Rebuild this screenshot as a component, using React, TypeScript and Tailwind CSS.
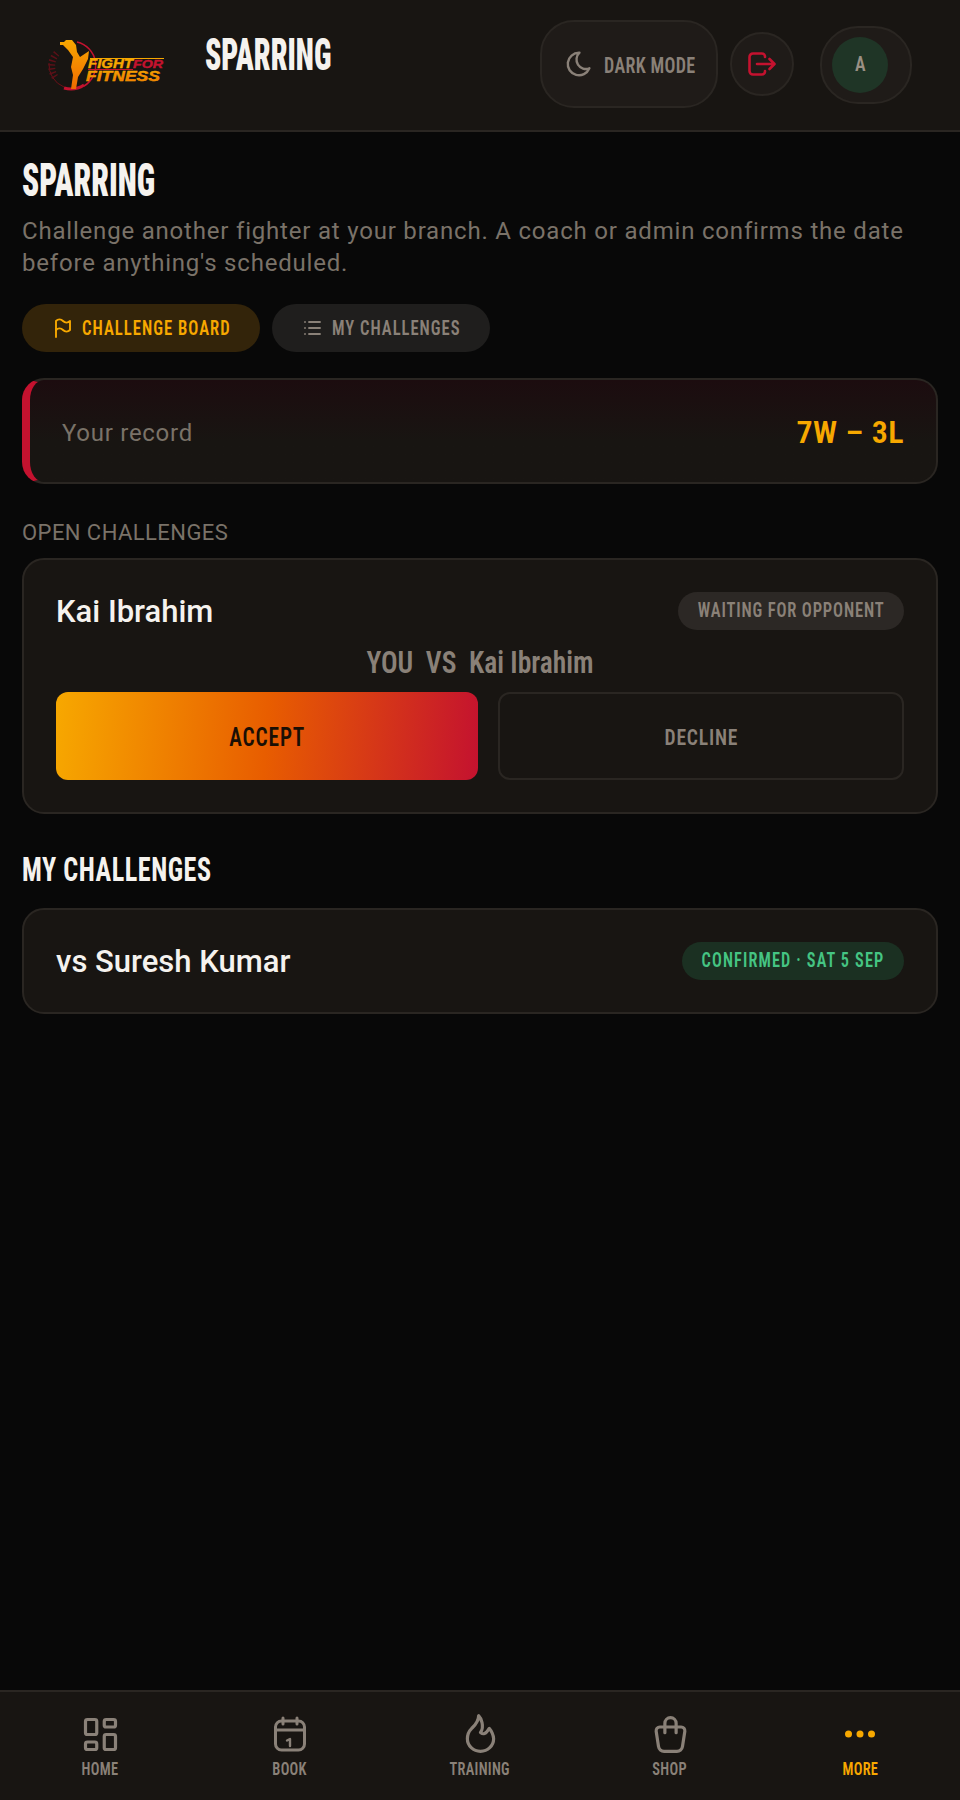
import type { ReactNode } from "react";
import { TbFlag, TbFlame, TbLayoutDashboard, TbList, TbMoon, TbShoppingBag } from "react-icons/tb";

const Cond = ({ className, children }: { className: string; children: ReactNode }) => (
  <span className={`inline-block whitespace-nowrap font-['Roboto',sans-serif] [font-stretch:75%] ${className}`}>{children}</span>
);

const Logo = () => (
  <svg viewBox="0 0 120 52" className="w-[120px] h-[52px] shrink-0">
    <defs>
      <linearGradient id="gold" x1="0" y1="0" x2="0" y2="1">
        <stop offset="0" stopColor="#f7a800" />
        <stop offset="1" stopColor="#f06a00" />
      </linearGradient>
    </defs>
    <path d="M31 3 A24 24 0 0 1 38 47" fill="none" stroke="#c4122f" strokeWidth="1.500" />
    <path d="M38 46 A24 24 0 0 1 18 49" fill="none" stroke="#c4122f" strokeWidth="3" />
    <path d="M18 48 A24 24 0 0 1 3 24" fill="none" stroke="#6b1018" strokeWidth="1" />
    <path d="M9 38 A19 19 0 0 1 11 14" fill="none" stroke="#5c1018" strokeWidth="7" strokeDasharray="1.500 2.500" />
    <path d="M14 3 L18 3 L20 1 L26 1 L30 6 L31 13 L34 18 L43 12 L42 20 L37 30 L32 38 L30 50 L25 50 L27 36 L25 28 L27 18 L22 11 L17 6 L14 6 Z" fill="url(#gold)" />
    <text x="42" y="29" fontFamily="'Liberation Sans',sans-serif" fontWeight="700" fontStyle="italic" fontSize="13.500" fill="#f7a800" stroke="#f7a800" strokeWidth="0.400" textLength="45" lengthAdjust="spacingAndGlyphs">FIGHT</text>
    <text x="87" y="29" fontFamily="'Liberation Sans',sans-serif" fontWeight="700" fontStyle="italic" fontSize="11" fill="#c4122f" stroke="#c4122f" strokeWidth="0.400" textLength="30" lengthAdjust="spacingAndGlyphs">FOR</text>
    <rect x="44" y="19" width="74" height="1" fill="#f7a800" />
    <rect x="42" y="30" width="45" height="1" fill="#c4122f" />
    <text x="40" y="42" fontFamily="'Liberation Sans',sans-serif" fontWeight="700" fontStyle="italic" fontSize="14" fill="url(#gold)" stroke="#f7a800" strokeWidth="0.400" textLength="74" lengthAdjust="spacingAndGlyphs">FITNESS</text>
  </svg>
);

const LogoutIcon = () => (
  <svg viewBox="0 0 28 24" className="w-[28px] h-[24px]" fill="none" stroke="currentColor" strokeWidth="2.600" strokeLinecap="round" strokeLinejoin="round">
    <path d="M17 5V4.500a3 3 0 0 0-3-3H5a3.500 3.500 0 0 0-3.500 3.500v14a3.500 3.500 0 0 0 3.500 3.500h9a3 3 0 0 0 3-3V19" />
    <path d="M9 12h17M21.500 7l5 5-5 5" />
  </svg>
);

const CalendarOne = () => (
  <svg viewBox="0 0 36 36" className="w-[36px] h-[36px]" fill="none" stroke="currentColor" strokeWidth="3" strokeLinecap="round" strokeLinejoin="round">
    <rect x="3.500" y="5" width="29" height="29" rx="6" />
    <path d="M3.500 14h29M11 2v6M25 2v6" />
    <path d="M15 24.500l3-1.500v7" strokeWidth="2.400" />
  </svg>
);

const DotsIcon = () => (
  <svg viewBox="0 0 32 32" className="w-8 h-8" fill="currentColor">
    <circle cx="4.500" cy="16" r="3.500" />
    <circle cx="16" cy="16" r="3.500" />
    <circle cx="27.500" cy="16" r="3.500" />
  </svg>
);

const NavItem = ({ icon, label, active }: { icon: ReactNode; label: string; active?: boolean }) => (
  <div className={`flex flex-col items-center gap-[8px] w-[120px] ${active ? "text-[#f7a800]" : "text-[#8a8178]"}`}>
    <div className="h-[36px] flex items-center justify-center">{icon}</div>
    <Cond className="origin-center scale-x-[0.8] text-[18px] leading-[18px] font-semibold tracking-[0.02em]">{label}</Cond>
  </div>
);

export default function App() {
  return (
    <div className="w-[960px] h-[1800px] bg-[#080808] flex flex-col font-['Roboto',sans-serif]">
      <header className="h-[132px] shrink-0 bg-[#181512] border-b-2 border-[#2a2622] flex items-start pl-[46px] pr-[48px]">
        <div className="mt-[39px]"><Logo /></div>
        <h1 className="ml-[39px] mt-[31px] flex h-[48px]">
          <Cond className="origin-left scale-x-[0.66] text-[45px] leading-[48px] font-black text-[#f5f2ee]">SPARRING</Cond>
        </h1>
        <div className="ml-auto flex items-start">
          <div className="mt-[20px] w-[178px] h-[88px] rounded-[34px] bg-[#1f1b18] border-2 border-[#2a2622] flex items-center justify-center gap-[10px] text-[#8a8178]">
            <TbMoon size={30} strokeWidth={1.9} />
            <Cond className="w-[91px] pt-[2px] origin-left scale-x-[0.82] text-[22px] font-semibold tracking-[0.02em]">DARK MODE</Cond>
          </div>
          <div className="mt-[32px] ml-[12px] w-[64px] h-[64px] rounded-full bg-[#1f1b18] border-2 border-[#2a2622] flex items-center justify-center text-[#c4122f]">
            <LogoutIcon />
          </div>
          <div className="mt-[26px] ml-[26px] w-[92px] h-[78px] rounded-[38px] bg-[#1f1b18] border-2 border-[#2a2622] flex items-center pl-[10px]">
            <div className="w-[56px] h-[56px] rounded-full bg-[#1f3526] flex items-center justify-center text-[#9a9084]">
              <Cond className="origin-center scale-x-[0.85] font-semibold text-[21px]">A</Cond>
            </div>
          </div>
        </div>
      </header>

      <main className="flex-1 px-[22px] pt-[24px]">
        <h2 className="flex h-[48px]">
          <Cond className="origin-left scale-x-[0.68] text-[46px] leading-[48px] font-black text-[#f5f2ee]">SPARRING</Cond>
        </h2>
        <p className="mt-[11px] text-[24px] leading-[32px] tracking-[0.8px] text-[#7a7268]">Challenge another fighter at your branch. A coach or admin confirms the date before anything's scheduled.</p>

        <div className="mt-[25px] flex gap-[12px]">
          <div className="w-[238px] h-[48px] rounded-full bg-[#33240a] text-[#f7a800] flex items-center justify-center gap-[7px] pr-[2px]">
            <TbFlag size={24} strokeWidth={1.9} />
            <Cond className="w-[148px] pt-[2px] origin-left scale-x-[0.855] text-[19.5px] font-semibold tracking-[0.06em]">CHALLENGE BOARD</Cond>
          </div>
          <div className="w-[218px] h-[48px] rounded-full bg-[#1f1e1d] text-[#8a8178] flex items-center justify-center gap-[8px] pr-[4px]">
            <TbList size={24} strokeWidth={1.9} />
            <Cond className="w-[127px] pt-[2px] origin-left scale-x-[0.85] text-[19.5px] font-semibold tracking-[0.06em]">MY CHALLENGES</Cond>
          </div>
        </div>

        <section className="mt-[26px] h-[106px] rounded-[22px] border-2 border-l-[8px] border-[#2a2622] border-l-[#c4122f] bg-gradient-to-b from-[#1c0c0f] to-[#181512] to-60% flex items-center justify-between pl-[32px] pr-[32px]">
          <span className="pt-[4px] text-[24px] tracking-[0.03em] text-[#7a7268]">Your record</span>
          <Cond className="pt-[2px] text-[32px] font-semibold tracking-[0.5px] text-[#f7a800]">7W – 3L</Cond>
        </section>

        <div className="mt-[36px] text-[22px] leading-[26px] text-[#7a7268] tracking-[0.02em]">OPEN CHALLENGES</div>

        <section className="mt-[12px] h-[256px] rounded-[22px] border-2 border-[#2a2622] bg-[#181512] px-[32px] pt-[32px]">
          <div className="flex items-center justify-between h-[38px]">
            <span className="pt-[2px] text-[31px] font-medium text-[#f5f2ee]">Kai Ibrahim</span>
            <span className="h-[38px] w-[226px] rounded-full bg-[#2c2825] flex items-center justify-center text-[#8a8178]">
              <Cond className="origin-center scale-x-[0.79] text-[21px] font-semibold tracking-[0.05em]">WAITING FOR OPPONENT</Cond>
            </span>
          </div>
          <div className="mt-[14px] flex justify-center h-[36px]">
            <Cond className="origin-center scale-x-[0.86] text-[32px] leading-[36px] font-semibold text-[#8a8178]">YOU&nbsp; VS&nbsp; Kai Ibrahim</Cond>
          </div>
          <div className="mt-[12px] flex gap-[20px]">
            <button className="w-[422px] h-[88px] rounded-[12px] pt-[3px] bg-[linear-gradient(95deg,#f7a800,#e85d00_50%,#c4122f)] text-[#1a0f05]">
              <Cond className="origin-center scale-x-[0.82] text-[26px] font-semibold tracking-[0.04em]">ACCEPT</Cond>
            </button>
            <button className="flex-1 h-[88px] rounded-[12px] pt-[3px] border-2 border-[#2a2622] text-[#8a8178]">
              <Cond className="origin-center scale-x-[0.89] text-[22px] font-semibold tracking-[0.04em]">DECLINE</Cond>
            </button>
          </div>
        </section>

        <h3 className="mt-[36px] flex h-[38px]">
          <Cond className="origin-left scale-x-[0.77] text-[34px] leading-[38px] font-bold tracking-[0.02em] text-[#f5f2ee]">MY CHALLENGES</Cond>
        </h3>

        <section className="mt-[20px] h-[106px] rounded-[22px] border-2 border-[#2a2622] bg-[#181512] px-[32px] flex items-center justify-between">
          <span className="pt-[2px] text-[31px] font-medium text-[#f5f2ee]">vs Suresh Kumar</span>
          <span className="h-[38px] w-[222px] rounded-full bg-[#1b3022] flex items-center justify-center text-[#45c483]">
            <Cond className="origin-center scale-x-[0.775] text-[21px] font-semibold tracking-[0.07em]">CONFIRMED · SAT 5 SEP</Cond>
          </span>
        </section>
      </main>

      <nav className="h-[110px] shrink-0 bg-[#181512] border-t-2 border-[#2a2622] flex items-start justify-between pl-[40px] pr-[40px] pt-[24px]">
        <NavItem icon={<TbLayoutDashboard size={45} strokeWidth={1.7} className="shrink-0" />} label="HOME" />
        <NavItem icon={<CalendarOne />} label="BOOK" />
        <NavItem icon={<TbFlame size={45} strokeWidth={1.7} className="shrink-0" />} label="TRAINING" />
        <NavItem icon={<TbShoppingBag size={45} strokeWidth={1.7} className="shrink-0" />} label="SHOP" />
        <NavItem icon={<DotsIcon />} label="MORE" active />
      </nav>
    </div>
  );
}
